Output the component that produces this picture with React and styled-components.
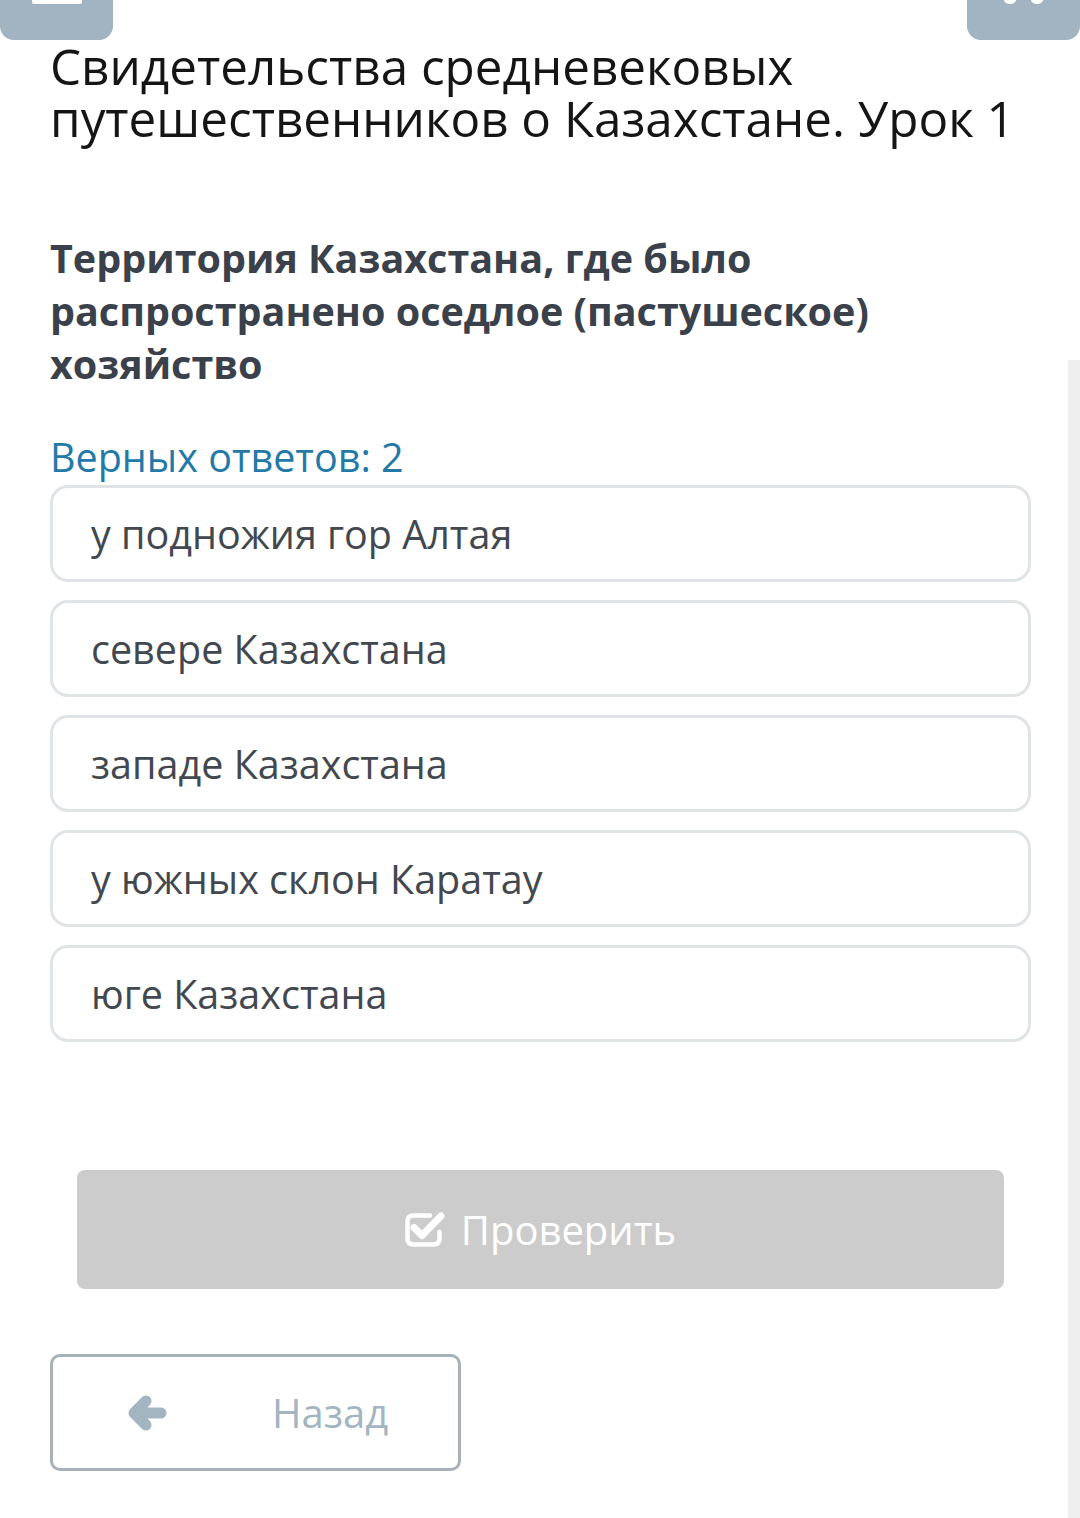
import { createGlobalStyle } from "styled-components";
import styled from "styled-components";

const GlobalStyle = createGlobalStyle`
  html, body {
    margin: 0;
    padding: 0;
    background: #ffffff;
  }
  body {
    font-family: "Open Sans", "Noto Sans", sans-serif;
    -webkit-font-smoothing: antialiased;
  }
  * {
    box-sizing: border-box;
  }
`;

const Page = styled.div`
  position: relative;
  width: 1080px;
  min-height: 1518px;
  overflow: hidden;
`;

const ScrollTrack = styled.div`
  position: absolute;
  top: 360px;
  right: 0;
  bottom: 0;
  width: 12px;
  background: #efefef;
`;

const TopBar = styled.header`
  display: flex;
  justify-content: space-between;
  height: 40px;
`;

const TopButton = styled.div`
  position: relative;
  width: 113px;
  height: 80px;
  margin-top: -40px;
  background: #a2b4c1;
  border-radius: 14px;
`;

const MenuBar = styled.span`
  position: absolute;
  left: 32px;
  top: 38px;
  width: 50px;
  height: 6px;
  border-radius: 2px;
  background: #ffffff;
`;

const Dot = styled.span`
  position: absolute;
  top: 36px;
  left: ${(p) => p.$left}px;
  width: 12px;
  height: 8px;
  border-radius: 50%;
  background: #ffffff;
`;

const Content = styled.main`
  padding: 0 49px 0 50px;
`;

const Title = styled.h1`
  margin: 0;
  font-size: 49.4px;
  line-height: 52px;
  font-weight: 400;
  color: #151515;
`;

const Question = styled.h2`
  margin: 88px 0 0;
  font-size: 39.5px;
  line-height: 53px;
  font-weight: 700;
  color: #3b414b;
`;

const Hint = styled.div`
  margin-top: 40px;
  font-size: 39.5px;
  line-height: 52px;
  color: #2379a8;
`;

const Answers = styled.ul`
  list-style: none;
  margin: 2px 0 0;
  padding: 0;
  display: flex;
  flex-direction: column;
  gap: 18px;
`;

const Answer = styled.li`
  display: flex;
  align-items: center;
  height: 97px;
  padding: 0 38px;
  border: 3px solid #e1e4e6;
  border-radius: 18px;
  font-size: 39.5px;
  color: #42484f;
`;

const CheckButton = styled.button`
  display: flex;
  align-items: center;
  justify-content: center;
  gap: 16px;
  width: calc(100% - 54px);
  height: 119px;
  margin: 128px 27px 0;
  border: none;
  border-radius: 8px;
  background: #cccccc;
  color: #ffffff;
  font-family: "Open Sans", "Noto Sans", sans-serif;
  font-size: 40px;
  padding: 0;

  svg {
    width: 40px;
    height: 36px;
    margin-top: -2px;
  }
`;

const BackButton = styled.button`
  display: flex;
  align-items: center;
  width: 411px;
  height: 117px;
  margin-top: 65px;
  padding: 0 0 0 74px;
  border: 3px solid #a6b2b8;
  border-radius: 10px;
  background: #ffffff;
  color: #a3b5c1;
  font-family: "Open Sans", "Noto Sans", sans-serif;
  font-size: 40px;

  svg {
    width: 40px;
    height: 36px;
  }

  span {
    margin-left: 105px;
  }
`;

const CheckSquareIcon = () => (
  <svg viewBox="0 0 40 36" fill="none" stroke="currentColor">
    <path
      d="M25 4.5 H8.5 Q2.5 4.5 2.5 10.5 V27.5 Q2.5 33.5 8.5 33.5 H28.5 Q34.5 33.5 34.5 27.5 V21"
      strokeWidth="4.5"
      strokeLinecap="round"
    />
    <path
      d="M9 16.5 L17 24.5 L36 5"
      strokeWidth="7"
      strokeLinecap="round"
      strokeLinejoin="round"
    />
  </svg>
);

const ArrowLeftIcon = () => (
  <svg viewBox="0 0 40 36" fill="none" stroke="currentColor">
    <path
      d="M8 18 H34 M19 6 L7 18 L19 30"
      strokeWidth="11"
      strokeLinecap="round"
      strokeLinejoin="round"
    />
  </svg>
);

const answers = [
  "у подножия гор Алтая",
  "севере Казахстана",
  "западе Казахстана",
  "у южных склон Каратау",
  "юге Казахстана",
];

export default function App() {
  return (
    <>
      <GlobalStyle />
      <Page>
        <TopBar>
          <TopButton>
            <MenuBar />
          </TopButton>
          <TopButton>
            <Dot $left={37} />
            <Dot $left={64} />
          </TopButton>
        </TopBar>
        <Content>
          <Title>
            Свидетельства средневековых путешественников о Казахстане. Урок 1
          </Title>
          <Question>
            Территория Казахстана, где было распространено оседлое
            (пастушеское) хозяйство
          </Question>
          <Hint>Верных ответов: 2</Hint>
          <Answers>
            {answers.map((a) => (
              <Answer key={a}>{a}</Answer>
            ))}
          </Answers>
          <CheckButton>
            <CheckSquareIcon />
            Проверить
          </CheckButton>
          <BackButton>
            <ArrowLeftIcon />
            <span>Назад</span>
          </BackButton>
        </Content>
        <ScrollTrack />
      </Page>
    </>
  );
}
